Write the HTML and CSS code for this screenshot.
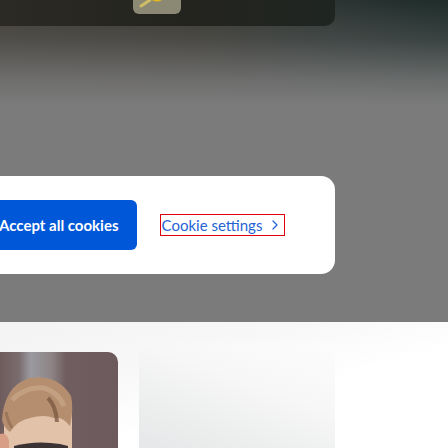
FILE: index.html
```html
<!DOCTYPE html>
<html lang="en">
<head>
<meta charset="utf-8">
<title>Cookie banner</title>
<link rel="stylesheet" href="styles.css">
</head>
<body>
<div class="page">
  <div class="overlay-zone">
    <header class="header">
      <div class="tile">
        <svg class="tile-art" width="48" height="14" viewBox="0 0 48 14" aria-hidden="true">
          <path d="M8 6 L17 0" stroke="#e6cf63" stroke-width="3" stroke-linecap="round" opacity="0.75"/>
          <path d="M19 0 Q24 3 29 0 Z" fill="#e1b81e"/>
        </svg>
      </div>
    </header>
    <section class="banner">
      <button class="btn-accept">Accept all cookies</button>
      <a class="link-settings focused" href="#">Cookie settings
        <svg class="chevron" width="6" height="10" viewBox="0 0 6 10" aria-hidden="true">
          <path d="M1 1 L5 5 L1 9" fill="none" stroke="currentColor" stroke-width="1.3" stroke-linecap="round" stroke-linejoin="round"/>
        </svg>
      </a>
    </section>
  </div>
  <section class="lower">
    <div class="photo photo-man">
      <svg width="118" height="96" viewBox="0 0 118 96" aria-hidden="true">
        <defs>
          <linearGradient id="bgm" x1="0" y1="0" x2="1" y2="0">
            <stop offset="0" stop-color="#6f5b5c"/>
            <stop offset="0.16" stop-color="#7a6c6e"/>
            <stop offset="0.26" stop-color="#9a9a9f"/>
            <stop offset="0.44" stop-color="#8d8384"/>
            <stop offset="0.56" stop-color="#6f5d5f"/>
            <stop offset="1" stop-color="#6c5a5c"/>
          </linearGradient>
        </defs>
        <rect width="118" height="96" fill="url(#bgm)"/>
        <path d="M4 96 L4 60 Q8 30 34 26 Q64 24 72 52 L72 96 Z" fill="#e3c2aa"/>
        <path d="M2 68 Q4 34 30 26 Q58 22 71 44 Q74 56 70 74 Q62 64 54 66 Q44 62 30 66 Q18 68 10 80 Q4 76 2 68 Z" fill="#b48e6e"/>
        <path d="M12 48 Q26 34 44 36 Q58 40 64 54" stroke="#c7a587" stroke-width="5" fill="none" opacity="0.8"/>
        <path d="M48 46 Q56 54 57 70" stroke="#7a5640" stroke-width="4" fill="none" opacity="0.75"/>
        <path d="M6 60 Q8 70 12 76" stroke="#8a664d" stroke-width="3" fill="none" opacity="0.6"/>
        <path d="M0 82 Q6 80 9 88 L9 96 L0 96 Z" fill="#d99f86"/>
        <path d="M14 94 Q36 88 60 92 L68 94 L68 96 L14 96 Z" fill="#3b3234"/>
      </svg>
    </div>
    <div class="photo photo-light"></div>
  </section>
</div>
</body>
</html>
```

FILE: styles.css
```css
html, body {
  margin: 0;
  padding: 0;
}

body {
  width: 448px;
  height: 448px;
  overflow: hidden;
  font-family: Lato, "Open Sans", sans-serif;
}

.page {
  display: flex;
  flex-direction: column;
  width: 448px;
  height: 448px;
}

.overlay-zone {
  height: 322px;
  flex: none;
  display: flex;
  flex-direction: column;
  background:
    linear-gradient(180deg, rgba(123,123,123,0) 0px, rgba(123,123,123,0.3) 40px, rgba(123,123,123,0.8) 80px, #7b7b7b 105px),
    linear-gradient(90deg, #3e3b35 0%, #36352f 45%, #2a3331 75%, #1e2c2a 100%);
}

.header {
  width: 335px;
  height: 26px;
  border-bottom-right-radius: 10px;
  background: linear-gradient(90deg, #2b2a25 0%, #24241f 55%, #1f2521 100%);
  display: flex;
}

.tile {
  margin-left: 133px;
  width: 48px;
  height: 14px;
  border-radius: 0 0 6px 6px;
  background: #8b8874;
  overflow: hidden;
}

.tile-art {
  display: block;
}

.banner {
  margin-top: 150px;
  width: 335px;
  height: 98px;
  box-sizing: border-box;
  padding: 24px 0;
  background: #ffffff;
  border-radius: 0 14px 14px 0;
  display: flex;
  align-items: center;
  gap: 24px;
}

.btn-accept {
  margin-left: -19px;
  height: 50px;
  padding: 0 18px;
  border: none;
  border-radius: 6px;
  background: #0057d7;
  color: #ffffff;
  font-family: Lato, "Open Sans", sans-serif;
  font-weight: 700;
  font-size: 15px;
  white-space: nowrap;
}

.link-settings {
  display: flex;
  align-items: center;
  gap: 10px;
  height: 20px;
  padding: 0 6px 0 1px;
  color: #2563d3;
  font-size: 15px;
  text-decoration: none;
  white-space: nowrap;
}

.focused {
  outline: 1px solid #e0000b;
}

.chevron {
  display: block;
}

.lower {
  flex: 1;
  display: flex;
  align-items: flex-start;
  background: linear-gradient(165deg, #f3f3f3 0%, #f8f8f8 35%, #ffffff 60%);
  overflow: hidden;
}

.photo {
  flex: none;
}

.photo-man {
  margin-top: 30px;
  width: 118px;
  height: 96px;
  border-top-right-radius: 10px;
  overflow: hidden;
}

.photo-man svg {
  display: block;
}

.photo-light {
  margin-top: 21px;
  margin-left: 21px;
  width: 196px;
  height: 105px;
  background: linear-gradient(200deg, #fcfcfc 0%, #f7f7f7 40%, #eceded 75%, #e6e7e8 100%);
}
```
